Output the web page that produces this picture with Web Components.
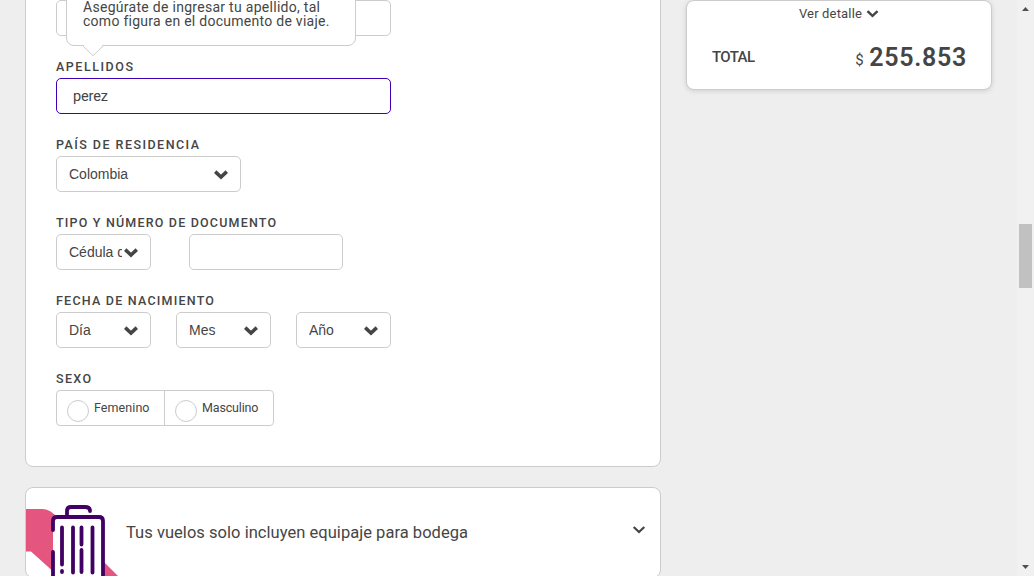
<!DOCTYPE html>
<html lang="es">
<head>
<meta charset="utf-8">
<title>Datos del pasajero</title>
<style>
html,body{margin:0;height:100%;overflow:hidden}
body{background:#eee;color:#454545;font-family:Roboto,"Liberation Sans",sans-serif;font-size:14px}
</style>
</head>
<body>
<checkout-page></checkout-page>
<script>
const define = (name, html, setup) => customElements.define(name, class extends HTMLElement {
  connectedCallback() {
    if (this.shadowRoot) return;
    this.attachShadow({mode: 'open'}).innerHTML = html;
    if (setup) setup(this, this.shadowRoot);
  }
});

/* One line of text, tracked to fill the given width. */
define('tracked-text', `<style>:host{display:block;white-space:nowrap}span{display:inline-block}</style><span><slot></slot></span>`, (el, root) => {
  const span = root.querySelector('span');
  const n = el.textContent.length;
  const natural = span.getBoundingClientRect().width;
  span.style.letterSpacing = ((+el.getAttribute('width') - natural) / (n - 1)) + 'px';
});

define('chevron-icon', `<style>:host{display:block;flex:none}svg{display:block;width:100%;height:100%}</style>
<svg viewBox="0 0 14 10"><path d="M2.500 2.800 7 7l4.500-4.200" fill="none" stroke="currentColor" stroke-linecap="square"/></svg>`, (el, root) => {
  root.querySelector('path').setAttribute('stroke-width', el.getAttribute('weight') || 3);
});

define('form-field', `<style>
:host{display:block;height:56px;margin-top:22px}
.label{height:20px;line-height:18px;font-size:12.5px;font-weight:500}
.row{display:flex}
</style><div class="label"><slot name="label"></slot></div><div class="row"><slot></slot></div>`);

define('text-input', `<style>
:host{display:block;box-sizing:border-box;height:36px;border:1px solid #ccc;border-radius:5px;background:#fff;padding-left:16px;line-height:36px;font-size:14.5px}
:host([focused]){border-color:#3d00b8}
</style><slot></slot>`);

define('select-box', `<style>
:host{display:flex;align-items:center;box-sizing:border-box;height:36px;border:1px solid #ccc;border-radius:5px;background:#fff;padding:0 12px;font:14px "Liberation Sans",sans-serif}
.value{flex:1;min-width:0;overflow:hidden;white-space:nowrap;line-height:20px;margin-top:-1px;margin-right:2px}
chevron-icon{width:14px;height:10px;margin-top:2px}
</style><span class="value"><slot></slot></span><chevron-icon weight="3.5"></chevron-icon>`);

define('radio-option', `<style>
:host{display:flex;box-sizing:border-box;padding-left:10px;font-size:12.5px;line-height:34px}
i{box-sizing:border-box;width:22px;height:22px;border:1px solid #ccc;border-radius:50%;margin:9px 5px 0 0}
</style><i></i><slot></slot>`);

define('radio-group', `<style>
:host{display:grid;grid-template-columns:108px 108px;box-sizing:border-box;width:218px;height:36px;border:1px solid #ccc;border-radius:4px}
::slotted(:first-child){border-right:1px solid #ccc}
</style><slot></slot>`);

define('panel-card', `<style>:host{display:block;box-sizing:border-box;background:#fff;border:1px solid #ccc;border-radius:8px}</style><slot></slot>`);

define('help-tip', `<style>
:host{box-sizing:border-box;width:290px;height:66px;border:1px solid #ccc;border-radius:8px;background:#fff;padding:19px 16px 0;line-height:14px;font-size:14px}
svg{position:absolute;left:15px;top:64px;width:22px;height:12px}
</style><slot></slot><svg viewBox="0 0 22 12"><path d="M0 0h22l-2 .5L11 10.5 2 .5z" fill="#fff"/><path d="M.5.5 11 10.7 21.500.5" fill="none" stroke="#ccc"/></svg>`);

define('suitcase-icon', `<style>:host{display:block;width:94px;height:88px}svg{display:block}</style>
<svg width="94" height="88" viewBox="0 0 94 88">
<path d="M0 21h16c6 0 10 3 14 7v58L5 63.500H0zM78 74l16 16H78z" fill="#e45580"/>
<path d="M27 34v54h51V34q0-5-5-5H32q-5 0-5 5" fill="#fff"/>
<g fill="none" stroke="#400064" stroke-width="3.800" stroke-linecap="round" stroke-linejoin="round">
<path d="M27 42v-9q0-4 4-4h42q4 0 4 4v60M27 64v30M41 29v-6q0-4 4-4h14q5 0 5 4M36 39.500v37M36 83v1M47 39.500v45M55.500 39.500v17M55.500 62v22M66.500 39.500v45"/>
</g></svg>`);

define('baggage-panel', `<style>
:host{display:block}
panel-card{display:flex;height:91px;overflow:hidden}
tracked-text{margin:33px auto 0 6px;font-size:16.500px;line-height:23px}
chevron-icon{width:14px;height:10px;margin:37px 14.500px 0 0}
</style><panel-card><suitcase-icon></suitcase-icon>
<tracked-text width="342">Tus vuelos solo incluyen equipaje para bodega</tracked-text>
<chevron-icon weight="2.200"></chevron-icon></panel-card>`);

define('price-summary', `<style>
:host{display:block;width:306px;height:90px}
panel-card{height:90px;box-shadow:0 1px 5px #0002;padding:0 25px}
.detail{display:flex;justify-content:center;align-items:center;height:25px;font-size:13px}
.detail chevron-icon{width:13px;height:10px;margin-left:4px}
.total{display:flex;align-items:baseline;margin-top:14px;line-height:36px;height:36px}
.name{font-size:15px;font-weight:500;margin-right:auto;position:relative;top:-4px}
.currency{font-size:15px;margin-right:5px;width:9px;position:relative;top:-1px}
.amount{font-size:25px;font-weight:600;margin-right:-1px}
</style><panel-card>
<div class="detail"><tracked-text width="63">Ver detalle</tracked-text><chevron-icon weight="2.6"></chevron-icon></div>
<div class="total"><tracked-text class="name" width="43">TOTAL</tracked-text><span class="currency">$</span><tracked-text class="amount" width="97">255.853</tracked-text></div>
</panel-card>`);

define('page-scrollbar', `<style>
:host{display:flex;flex-direction:column;justify-content:space-between;align-items:center;width:17px;height:576px;background:#f1f1f1}
svg{display:block;width:17px;height:17px}
.track{flex:1;width:13px;padding-top:207px;box-sizing:border-box}
.thumb{height:64px;background:#c1c1c1}
</style>
<svg viewBox="0 0 17 17"><path d="M5 11 8.500 7 12 11z" fill="#505050"/></svg>
<div class="track"><div class="thumb"></div></div>
<svg viewBox="0 0 17 17"><path d="M5 6h7L8.500 10z" fill="#505050"/></svg>`);

define('passenger-form', `<style>
:host{display:block}
panel-card{height:487px;padding:19px 30px 0}
.previous{position:relative;width:335px}
help-tip{position:absolute;left:10px;top:-20px}
</style><panel-card>
<div class="previous"><text-input></text-input>
<help-tip><tracked-text width="237">Asegúrate de ingresar tu apellido, tal</tracked-text><tracked-text width="246">como figura en el documento de viaje.</tracked-text></help-tip></div>
<form-field><tracked-text slot="label" width="77">APELLIDOS</tracked-text>
<text-input focused style="width:335px"><tracked-text width="35">perez</tracked-text></text-input></form-field>
<form-field><tracked-text slot="label" width="143">PAÍS DE RESIDENCIA</tracked-text>
<select-box style="width:185px">Colombia</select-box></form-field>
<form-field><tracked-text slot="label" width="220">TIPO Y NÚMERO DE DOCUMENTO</tracked-text>
<select-box style="width:95px">Cédula de Ciudadanía</select-box><text-input style="width:154px;margin-left:38px"></text-input></form-field>
<form-field><tracked-text slot="label" width="158">FECHA DE NACIMIENTO</tracked-text>
<select-box style="width:95px">Día</select-box><select-box style="width:95px;margin-left:25px">Mes</select-box><select-box style="width:95px;margin-left:25px">Año</select-box></form-field>
<form-field><tracked-text slot="label" width="35">SEXO</tracked-text>
<radio-group><radio-option><tracked-text width="55.500">Femenino</tracked-text></radio-option><radio-option><tracked-text width="56.500">Masculino</tracked-text></radio-option></radio-group></form-field>
</panel-card>`);

define('checkout-page', `<style>
:host{display:flex;height:576px;overflow:hidden;padding-left:25px}
main{width:636px;margin-top:-20px;flex:none}
baggage-panel{margin-top:20px}
price-summary{margin-left:25px}
page-scrollbar{margin-left:auto}
</style><main><passenger-form></passenger-form><baggage-panel></baggage-panel></main>
<price-summary></price-summary><page-scrollbar></page-scrollbar>`);
</script>
</body>
</html>
